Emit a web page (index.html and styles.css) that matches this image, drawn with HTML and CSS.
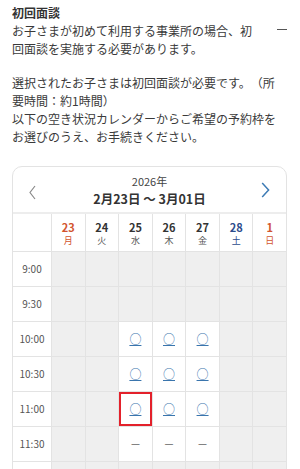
FILE: index.html
```html
<!DOCTYPE html>
<html lang="ja">
<head>
<meta charset="utf-8">
<title>初回面談</title>
<link rel="stylesheet" href="styles.css">
</head>
<body>
<div class="page">
  <div class="acc-head">
    <div class="acc-text">
      <div class="title">初回面談</div>
      <p class="lead">お子さまが初めて利用する事業所の場合、初回面談を実施する必要があります。</p>
    </div>
    <span class="minus"></span>
  </div>
  <p class="note">選択されたお子さまは初回面談が必要です。（所要時間：約1時間）<br>以下の空き状況カレンダーからご希望の予約枠をお選びのうえ、お手続きください。</p>

  <div class="cal">
    <div class="cal-head">
      <span class="nav prev"><svg width="7" height="15" viewBox="0 0 7 15"><path d="M6 1 L1 7.5 L6 14" fill="none" stroke="#8a8a8a" stroke-width="1.2"/></svg></span>
      <div class="range">
        <div class="year">2026年</div>
        <div class="dates">2月23日 〜 3月01日</div>
      </div>
      <span class="nav next"><svg width="9" height="16" viewBox="0 0 9 16"><path d="M1.2 1 L7.6 8 L1.2 15" fill="none" stroke="#3d7bb5" stroke-width="1.5"/></svg></span>
    </div>
    <div class="grid">
      <div class="corner"></div>
      <div class="day hol"><b>23</b><i>月</i></div>
      <div class="day"><b>24</b><i>火</i></div>
      <div class="day"><b>25</b><i>水</i></div>
      <div class="day"><b>26</b><i>木</i></div>
      <div class="day"><b>27</b><i>金</i></div>
      <div class="day sat"><b>28</b><i>土</i></div>
      <div class="day hol"><b>1</b><i>日</i></div>

      <div class="time">9:00</div>
      <div class="off"></div><div class="off"></div><div class="off"></div><div class="off"></div><div class="off"></div><div class="off"></div><div class="off"></div>

      <div class="time">9:30</div>
      <div class="off"></div><div class="off"></div><div class="off"></div><div class="off"></div><div class="off"></div><div class="off"></div><div class="off"></div>

      <div class="time">10:00</div>
      <div class="off"></div><div class="off"></div>
      <div class="slot"><a href="#">○</a></div><div class="slot"><a href="#">○</a></div><div class="slot"><a href="#">○</a></div>
      <div class="off"></div><div class="off"></div>

      <div class="time">10:30</div>
      <div class="off"></div><div class="off"></div>
      <div class="slot"><a href="#">○</a></div><div class="slot"><a href="#">○</a></div><div class="slot"><a href="#">○</a></div>
      <div class="off"></div><div class="off"></div>

      <div class="time">11:00</div>
      <div class="off"></div><div class="off"></div>
      <div class="slot selected"><a href="#">○</a></div><div class="slot"><a href="#">○</a></div><div class="slot"><a href="#">○</a></div>
      <div class="off"></div><div class="off"></div>

      <div class="time">11:30</div>
      <div class="off"></div><div class="off"></div>
      <div class="slot full">－</div><div class="slot full">－</div><div class="slot full">－</div>
      <div class="off"></div><div class="off"></div>

      <div class="time"></div>
      <div class="off"></div><div class="off"></div><div class="off"></div><div class="off"></div><div class="off"></div><div class="off"></div><div class="off"></div>
    </div>
  </div>
</div>
</body>
</html>
```
FILE: styles.css
```css
html, body {
  margin: 0;
  padding: 0;
  background: #fff;
}
body {
  font-family: "Noto Sans CJK JP", "Noto Sans", sans-serif;
  color: #3a3a3a;
  font-size: 12px;
  line-height: 18px;
  text-spacing-trim: space-all;
}
.page {
  padding: 4px 13px 0 12px;
}
.acc-head {
  display: flex;
  align-items: center;
  gap: 16px;
}
.acc-text {
  flex: 1;
  min-width: 0;
}
.title {
  font-weight: 700;
  color: #333;
}
.lead {
  margin: 0;
}
.minus {
  width: 10px;
  height: 1.5px;
  background: #555;
  margin-top: -3px;
}
.note {
  margin: 16px 0 0;
  padding-right: 7px;
}
.cal {
  margin-top: 20px;
  border: 1px solid #e3e3e3;
  border-radius: 10px;
  overflow: hidden;
}
.cal-head {
  display: flex;
  align-items: center;
  height: 45px;
  border-bottom: 2px solid #ededed;
  padding: 0 16px;
}
.nav {
  width: 40px;
  display: flex;
}
.prev {
  margin-top: 5px;
}
.next {
  justify-content: flex-end;
}
.range {
  flex: 1;
  text-align: center;
  padding-top: 2px;
}
.year {
  font-size: 11px;
  line-height: 16px;
  color: #444;
}
.dates {
  font-size: 12.5px;
  line-height: 19px;
  font-weight: 700;
  color: #333;
}
.grid {
  display: grid;
  grid-template-columns: 38px repeat(7, 1fr);
  grid-template-rows: 37px repeat(7, 34px);
  gap: 1px;
  background: #e3e3e3;
}
.grid > div {
  background: #fff;
}
.grid > .off {
  background: #efefef;
}
.day {
  display: flex;
  flex-direction: column;
  align-items: center;
  padding-top: 7px;
}
.day b {
  font-size: 11px;
  line-height: 13px;
  font-weight: 700;
  color: #333;
}
.day i {
  font-style: normal;
  font-size: 9px;
  line-height: 13px;
  color: #555;
}
.day.hol b, .day.hol i {
  color: #d2552f;
}
.day.sat b, .day.sat i {
  color: #2c4c8c;
}
.time {
  display: flex;
  align-items: center;
  justify-content: center;
  font-size: 10px;
  color: #555;
}
.slot {
  display: flex;
  align-items: center;
  justify-content: center;
}
.slot a {
  color: #3a75ad;
  font-size: 12px;
  line-height: 14px;
  text-decoration: underline;
}
.slot.full {
  font-size: 11px;
  color: #666;
}
.slot.selected {
  box-shadow: inset 0 0 0 2px #e3212b;
}
```
